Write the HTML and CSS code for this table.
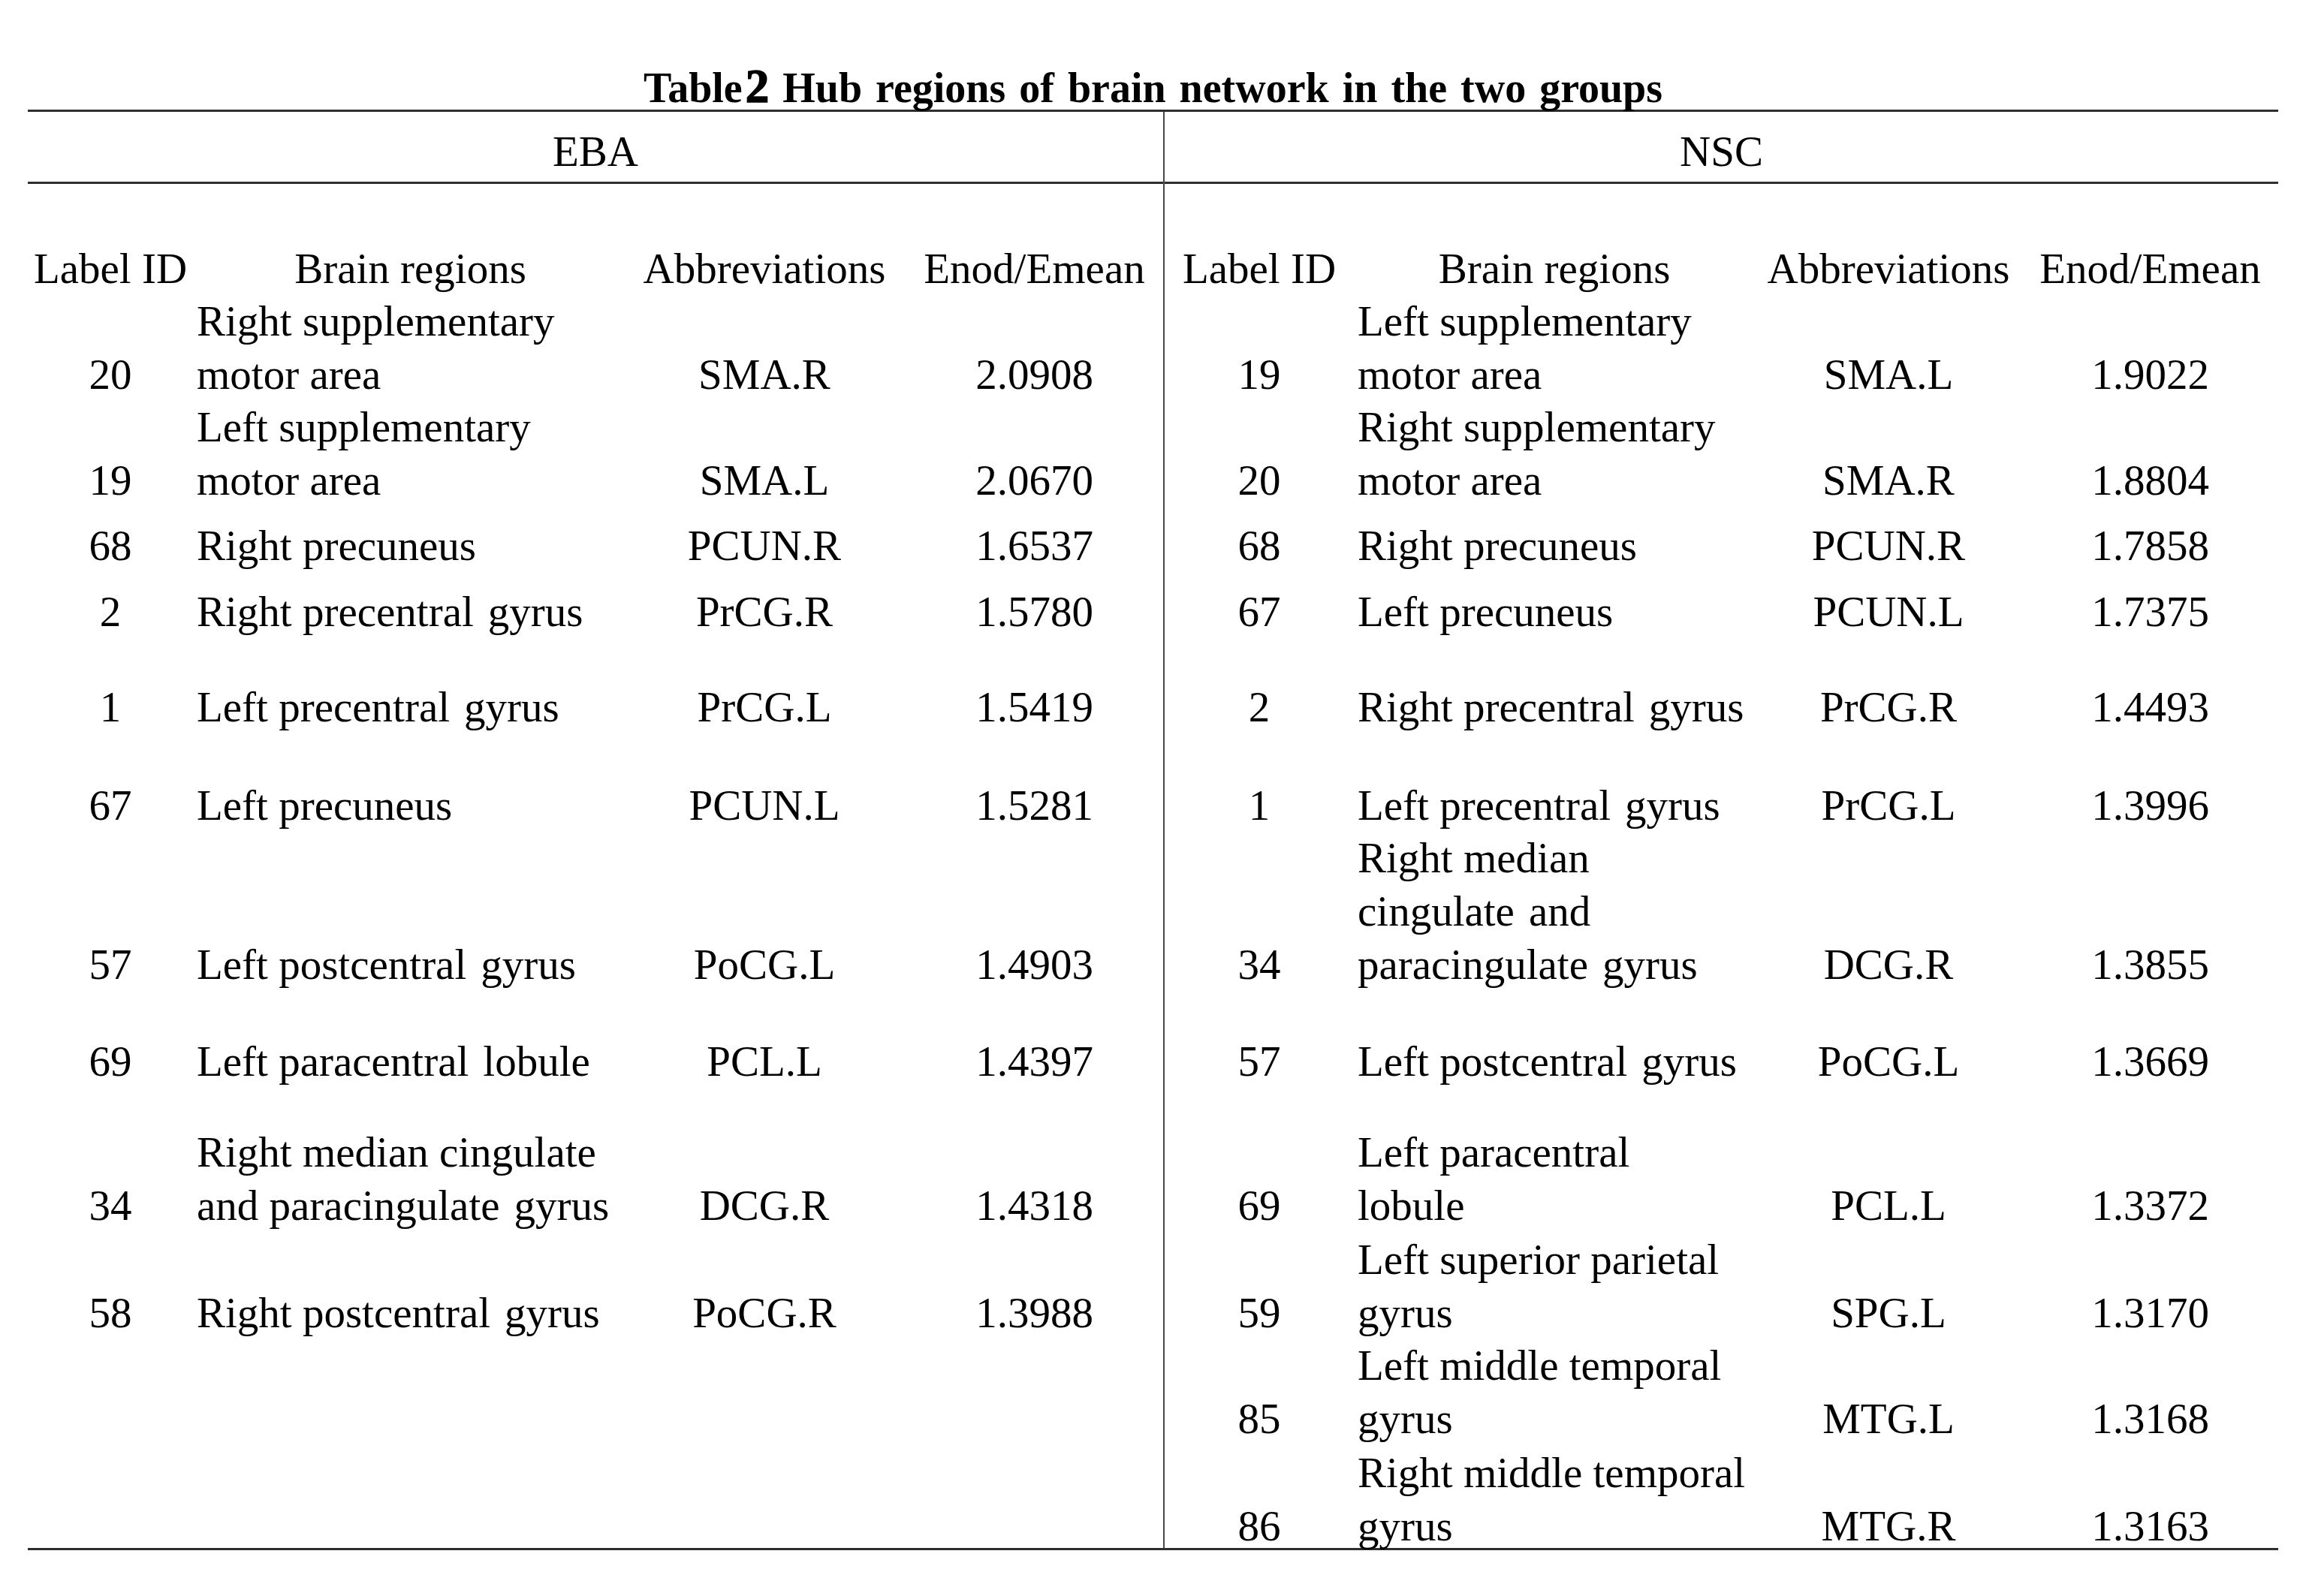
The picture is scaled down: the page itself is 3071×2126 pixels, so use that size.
FILE: index.html
```html
<!DOCTYPE html>
<html lang="en">
<head>
<meta charset="utf-8">
<title>Table 2 Hub regions of brain network in the two groups</title>
<link rel="stylesheet" href="styles.css">
</head>
<body>
<div class="page">
  <div class="caption">Table<span class="num">2</span> Hub regions of brain network in the two groups</div>
  <div class="tbl">
    <div class="half eba">
      <div class="group">EBA</div>
      <div class="grid">
        <div class="c">Label ID</div><div class="c">Brain regions</div><div class="c">Abbreviations</div><div class="c en">Enod/Emean</div>
        <div class="c">20</div><div class="r">Right supplementary<br>motor area</div><div class="c">SMA.R</div><div class="c en">2.0908</div>
        <div class="c">19</div><div class="r">Left supplementary<br>motor area</div><div class="c">SMA.L</div><div class="c en">2.0670</div>
        <div class="c">68</div><div class="r">Right precuneus</div><div class="c">PCUN.R</div><div class="c en">1.6537</div>
        <div class="c">2</div><div class="r">Right precentral &#8202;gyrus</div><div class="c">PrCG.R</div><div class="c en">1.5780</div>
        <div class="c">1</div><div class="r">Left precentral &#8202;gyrus</div><div class="c">PrCG.L</div><div class="c en">1.5419</div>
        <div class="c">67</div><div class="r">Left precuneus</div><div class="c">PCUN.L</div><div class="c en">1.5281</div>
        <div class="c">57</div><div class="r">Left postcentral &#8202;gyrus</div><div class="c">PoCG.L</div><div class="c en">1.4903</div>
        <div class="c">69</div><div class="r">Left paracentral &#8202;lobule</div><div class="c">PCL.L</div><div class="c en">1.4397</div>
        <div class="c">34</div><div class="r">Right median cingulate<br>and paracingulate &#8202;gyrus</div><div class="c">DCG.R</div><div class="c en">1.4318</div>
        <div class="c">58</div><div class="r">Right postcentral &#8202;gyrus</div><div class="c">PoCG.R</div><div class="c en">1.3988</div>
      </div>
    </div>
    <div class="half nsc">
      <div class="group">NSC</div>
      <div class="grid">
        <div class="c">Label ID</div><div class="c">Brain regions</div><div class="c">Abbreviations</div><div class="c">Enod/Emean</div>
        <div class="c">19</div><div class="r">Left supplementary<br>motor area</div><div class="c">SMA.L</div><div class="c">1.9022</div>
        <div class="c">20</div><div class="r">Right supplementary<br>motor area</div><div class="c">SMA.R</div><div class="c">1.8804</div>
        <div class="c">68</div><div class="r">Right precuneus</div><div class="c">PCUN.R</div><div class="c">1.7858</div>
        <div class="c">67</div><div class="r">Left precuneus</div><div class="c">PCUN.L</div><div class="c">1.7375</div>
        <div class="c">2</div><div class="r">Right precentral &#8202;gyrus</div><div class="c">PrCG.R</div><div class="c">1.4493</div>
        <div class="c">1</div><div class="r">Left precentral &#8202;gyrus</div><div class="c">PrCG.L</div><div class="c">1.3996</div>
        <div class="c">34</div><div class="r">Right median<br>cingulate &#8202;and<br>paracingulate &#8202;gyrus</div><div class="c">DCG.R</div><div class="c">1.3855</div>
        <div class="c">57</div><div class="r">Left postcentral &#8202;gyrus</div><div class="c">PoCG.L</div><div class="c">1.3669</div>
        <div class="c">69</div><div class="r">Left paracentral<br>lobule</div><div class="c">PCL.L</div><div class="c">1.3372</div>
        <div class="c">59</div><div class="r">Left superior parietal<br>gyrus</div><div class="c">SPG.L</div><div class="c">1.3170</div>
        <div class="c">85</div><div class="r">Left middle temporal<br>gyrus</div><div class="c">MTG.L</div><div class="c">1.3168</div>
        <div class="c last">86</div><div class="r last">Right middle temporal<br>gyrus</div><div class="c last">MTG.R</div><div class="c last">1.3163</div>
      </div>
    </div>
  </div>
</div>
</body>
</html>
```

FILE: styles.css
```css
html, body {
  margin: 0;
  padding: 0;
  background: #ffffff;
}

body {
  font-family: "Liberation Serif", "Times New Roman", "DejaVu Serif", serif;
  color: #000000;
  font-size: 57px;
}

.page {
  padding: 84px 0 0 37px;
}

.caption {
  width: 2997px;
  text-align: center;
  font-weight: bold;
  font-size: 56px;
  line-height: 62px;
  height: 62px;
  word-spacing: 4px;
  white-space: nowrap;
}

.caption .num {
  font-size: 63px;
  font-weight: bold;
  margin-left: 4px;
  -webkit-text-stroke: 1.5px #000000;
}

.tbl {
  width: 2997px;
  display: flex;
  border-top: 3px solid #2e2e2e;
  border-bottom: 3px solid #2e2e2e;
}

.half {
  display: flex;
  flex-direction: column;
}

.eba {
  width: 1512px;
}

.nsc {
  width: 1483px;
  border-left: 2px solid #4a4a4a;
}

.group {
  height: 96px;
  box-sizing: border-box;
  border-bottom: 3px solid #2e2e2e;
  display: flex;
  align-items: flex-end;
  justify-content: center;
  padding-bottom: 5px;
  line-height: 71px;
}

.grid {
  display: grid;
  grid-template-rows: 148px 141px 141px 87px 88px 127px 131px 212px 129px 192px 143px 141px 137px;
}

.eba .grid {
  grid-template-columns: 220px 579px 364px 349px;
}

.nsc .grid {
  grid-template-columns: 252px 534px 356px 341px;
}

.grid > div {
  align-self: end;
  line-height: 71px;
  white-space: nowrap;
}

.c {
  text-align: center;
}

.en {
  padding-left: 6px;
}

.r {
  text-align: left;
  padding-left: 5px;
}

.last {
  margin-bottom: -6px;
}
```
